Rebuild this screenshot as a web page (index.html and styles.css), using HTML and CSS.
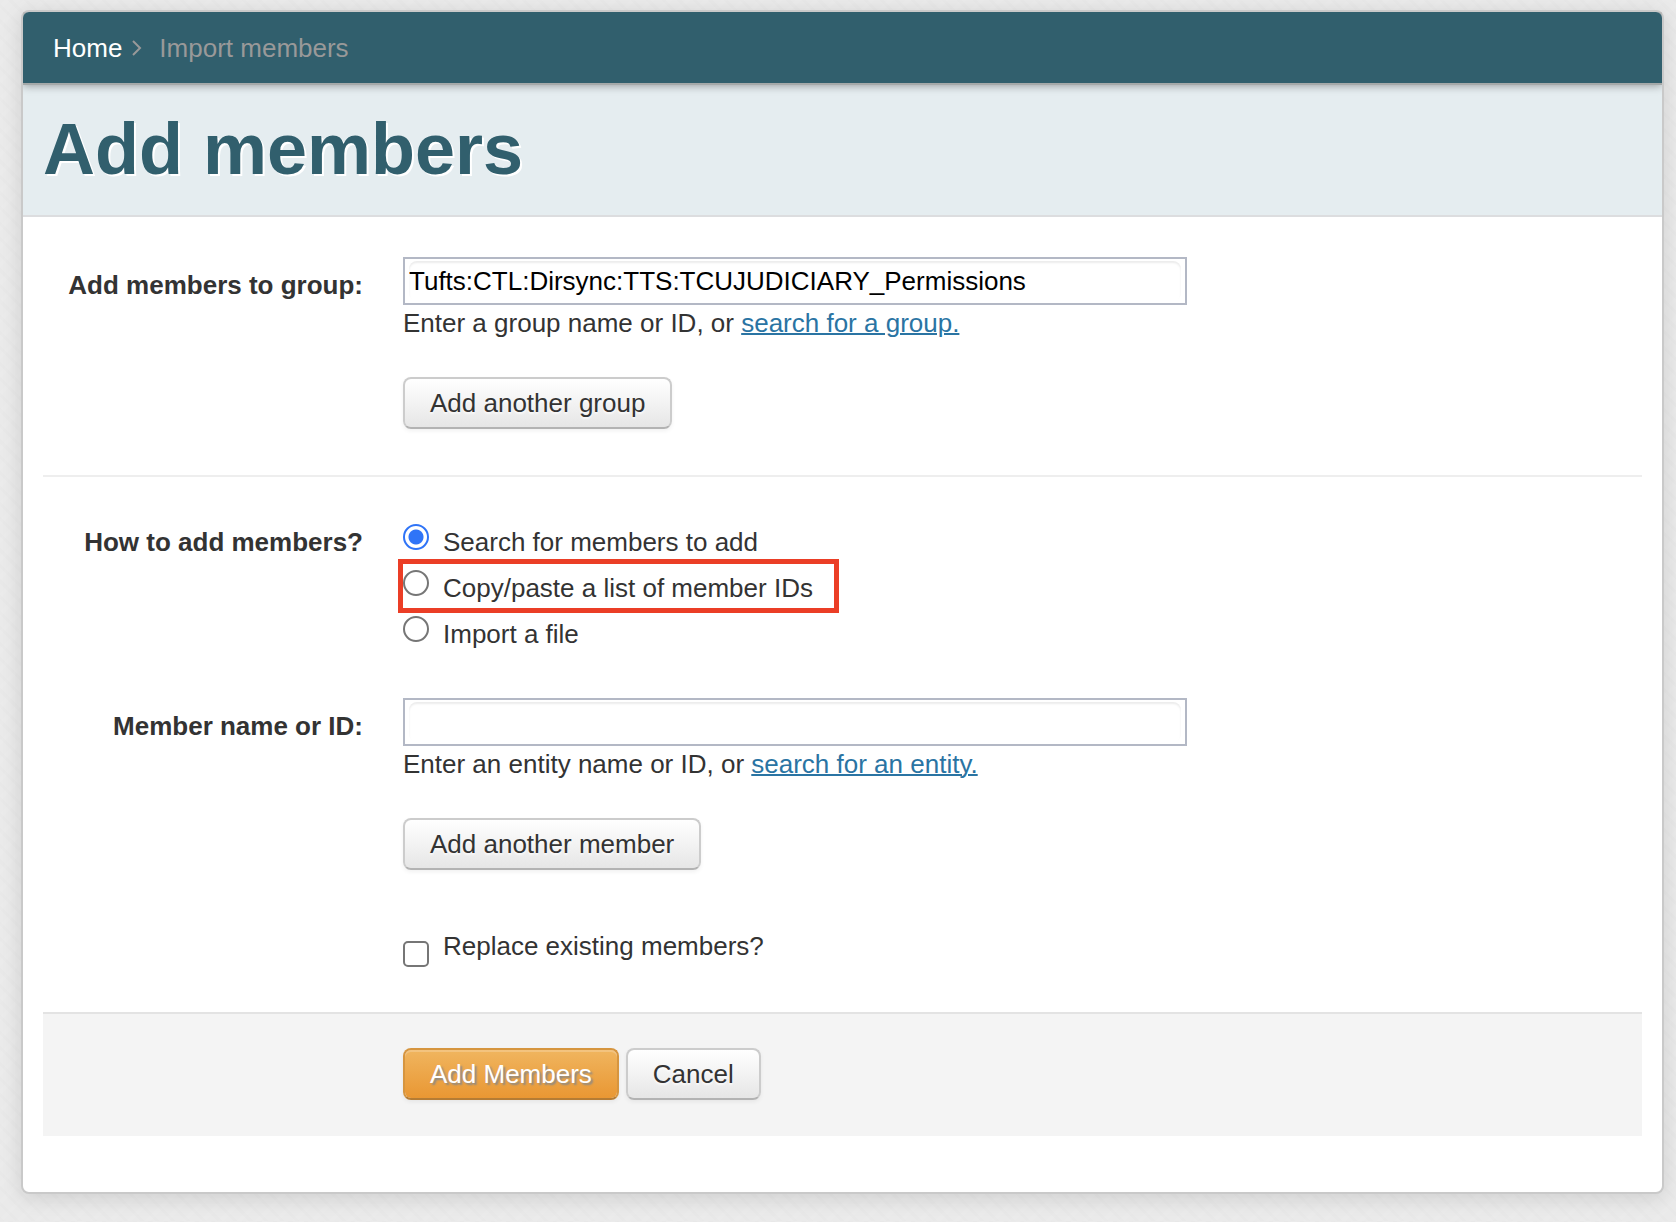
FILE: index.html
```html
<!DOCTYPE html>
<html lang="en">
<head>
<meta charset="utf-8">
<title>Add members</title>
<link rel="stylesheet" href="styles.css">
</head>
<body>
<main class="card">
  <nav class="breadcrumb" aria-label="Breadcrumb">
    <a class="breadcrumb-link" href="#">Home</a>
    <svg class="chevron" viewBox="0 0 10 16" aria-hidden="true"><path d="M1 1l7 7-7 7"/></svg>
    <span class="breadcrumb-current">Import members</span>
  </nav>
  <header class="page-header">
    <h1 class="page-title">Add members</h1>
  </header>
  <form class="form">
    <section class="section section-group">
      <label class="field-label" for="group">Add members to group:</label>
      <div class="field">
        <div class="combo"><input class="text-input" id="group" type="text" value="Tufts:CTL:Dirsync:TTS:TCUJUDICIARY_Permissions"></div>
        <p class="help">Enter a group name or ID, or <a class="link" href="#">search for a group.</a></p>
        <button class="button" type="button">Add another group</button>
      </div>
    </section>
    <section class="section section-how" role="radiogroup" aria-labelledby="how-label">
      <div class="field-label field-label-top" id="how-label">How to add members?</div>
      <div class="options">
        <label class="option"><input class="radio" type="radio" name="how" checked><span>Search for members to add</span></label>
        <label class="option option-marked"><input class="radio" type="radio" name="how"><span>Copy/paste a list of member IDs</span></label>
        <label class="option"><input class="radio" type="radio" name="how"><span>Import a file</span></label>
      </div>
    </section>
    <section class="section section-member">
      <label class="field-label" for="member">Member name or ID:</label>
      <div class="field">
        <div class="combo"><input class="text-input" id="member" type="text"></div>
        <p class="help">Enter an entity name or ID, or <a class="link" href="#">search for an entity.</a></p>
        <button class="button" type="button">Add another member</button>
        <label class="option option-replace"><input class="checkbox" type="checkbox"><span>Replace existing members?</span></label>
      </div>
    </section>
    <div class="actions">
      <button class="button button-primary" type="submit">Add Members</button>
      <button class="button" type="button">Cancel</button>
    </div>
  </form>
</main>
</body>
</html>
```
FILE: styles.css
```css
* {
  box-sizing: border-box;
}

body {
  margin: 0;
  padding: 10px 12px 27px 21px;
  color: #333;
  font: 26px/36px "Liberation Sans", Arial, sans-serif;
  background-color: #eaeaea;
  background-image:
    repeating-linear-gradient(45deg, rgba(0, 0, 0, 0.006) 0 3px, transparent 3px 11px),
    repeating-linear-gradient(-45deg, rgba(255, 255, 255, 0.06) 0 4px, transparent 4px 13px);
}

.card {
  border: 2px solid #c9c9c9;
  border-radius: 8px;
  background: #fff;
  box-shadow: 0 4px 20px rgba(0, 0, 0, 0.12);
}

.breadcrumb {
  position: relative;
  display: flex;
  align-items: center;
  padding: 18px 30px 17px;
  border-bottom: 2px solid #a5a9a9;
  border-radius: 6px 6px 0 0;
  background: #315f6d;
  background-clip: padding-box;
  box-shadow: 0 1px 8px rgba(0, 0, 0, 0.35);
  clip-path: inset(0 0 -12px 0);
}

.breadcrumb-link {
  color: #fff;
  text-decoration: none;
}

.chevron {
  width: 10px;
  height: 16px;
  margin: 0 17px 0 10px;
  fill: none;
  stroke: #999;
  stroke-width: 2;
}

.breadcrumb-current {
  color: #999;
}

.page-header {
  padding: 19px 20px 21px;
  border-bottom: 2px solid #dcdddf;
  background: #e5edf0;
}

.page-title {
  margin: 0;
  color: #315f6d;
  font-size: 72px;
  line-height: 90px;
  text-shadow: 2px 2px 0 #fff;
}

.form {
  padding: 0 20px 56px;
}

.section {
  display: grid;
  grid-template-columns: 320px minmax(0, 1fr);
  column-gap: 40px;
}

.section-group {
  padding: 40px 0 46px;
  border-bottom: 2px solid #eee;
}

.section-how {
  padding: 47px 0 46px;
}

.section-member {
  padding-bottom: 45px;
}

.field-label {
  padding-top: 10px;
  font-weight: bold;
  text-align: right;
}

.field-label-top {
  padding-top: 0;
}

.field {
  display: flex;
  flex-direction: column;
  align-items: flex-start;
}

.combo {
  width: 100%;
  max-width: 784px;
  height: 48px;
  padding: 2px 4px;
  border: 2px solid #b3b8c5;
}

.text-input {
  display: block;
  width: 100%;
  height: 40px;
  padding: 0;
  border: 0;
  border-radius: 8px;
  outline: 0;
  background: #fff;
  box-shadow: inset 0 2px 2px #ececec;
  color: #000;
  font: inherit;
}

.help {
  margin: 0 0 36px;
}

.link {
  color: #2a74a3;
  text-decoration-thickness: 2px;
}

.button {
  height: 52px;
  padding: 0 25px;
  border: 2px solid #ccc;
  border-bottom-color: #b3b3b3;
  border-radius: 8px;
  background: linear-gradient(#fff, #e6e6e6) padding-box;
  box-shadow: 0 2px 4px rgba(0, 0, 0, 0.06);
  color: #333;
  font: inherit;
  text-shadow: 0 2px 2px rgba(255, 255, 255, 0.75);
}

.button-primary {
  border-color: #d6953f;
  border-bottom-color: #b57c34;
  background: linear-gradient(#f0b55f, #e99733) padding-box;
  box-shadow: inset 0 2px 0 rgba(255, 255, 255, 0.2), 0 2px 4px rgba(0, 0, 0, 0.06);
  color: #fff;
  text-shadow: 2px 2px 2px #888;
}

.options {
  display: flex;
  flex-direction: column;
  align-items: flex-start;
  gap: 10px;
}

.option {
  position: relative;
  display: flex;
  align-items: flex-start;
  gap: 14px;
}

.option-marked::after {
  content: "";
  position: absolute;
  inset: -11px -26px -7px -5px;
  border: 5px solid #eb3e26;
  pointer-events: none;
}

.option-replace {
  margin-top: 58px;
}

.radio,
.checkbox {
  flex: none;
  appearance: none;
  width: 26px;
  height: 26px;
  margin: 0;
  border: 2px solid #767676;
  background: #fff;
}

.radio {
  border-radius: 50%;
}

.radio:checked {
  border-color: #2f74f7;
  background: radial-gradient(circle, #2f74f7 7px, #fff 8px);
}

.checkbox {
  margin-top: 13px;
  border-radius: 5px;
}

.checkbox:checked {
  background: #2f74f7;
}

.actions {
  display: flex;
  gap: 7px;
  padding: 34px 0 36px 360px;
  border-top: 2px solid #e3e3e3;
  background: #f4f4f4;
}
```
